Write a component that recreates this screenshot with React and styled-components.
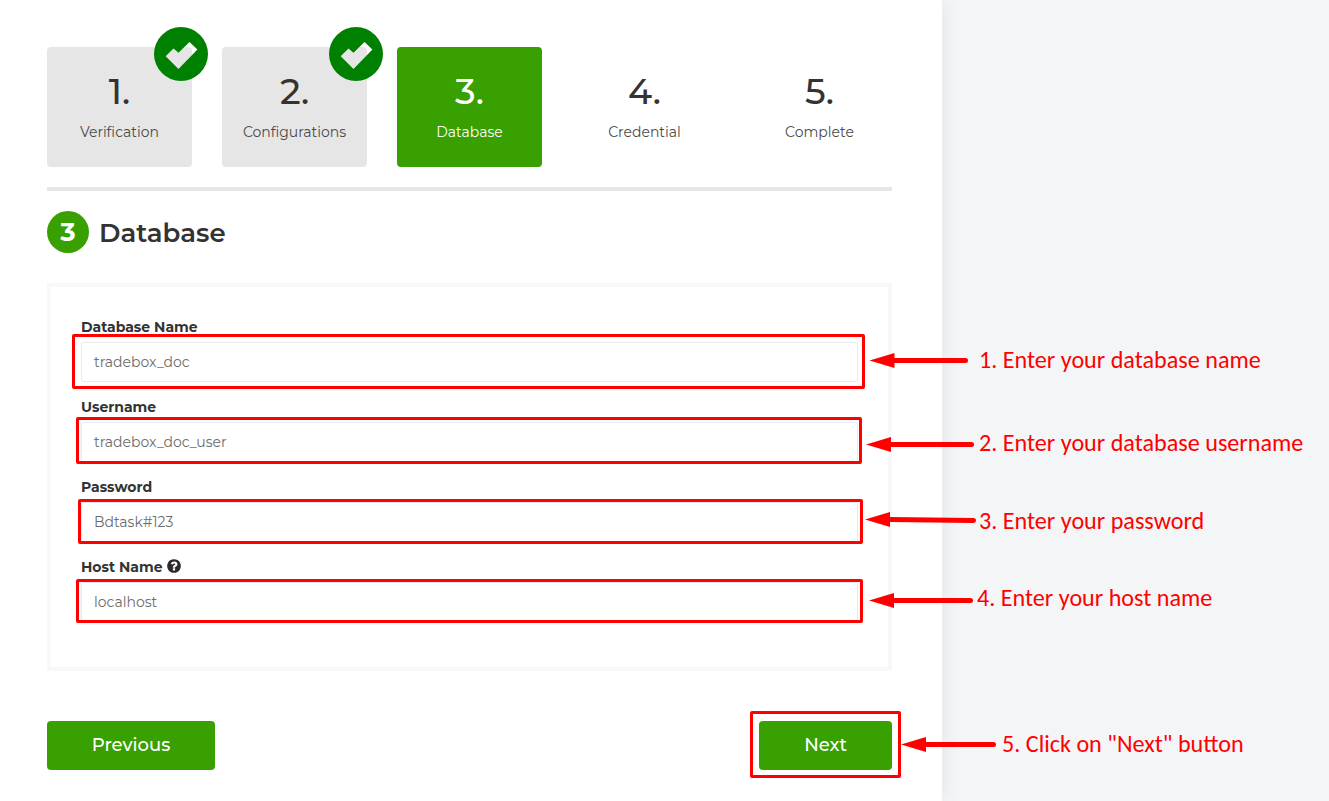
import React from 'react';
import styled, { createGlobalStyle } from 'styled-components';

const GlobalStyle = createGlobalStyle`
  *, *::before, *::after { box-sizing: border-box; }
  body {
    margin: 0;
    background: #f3f5f7;
    color: #333;
    font-family: Montserrat, Inter, "Liberation Sans", sans-serif;
    overflow: hidden;
  }
`;

const Page = styled.div`
  position: relative;
  width: 1329px;
  height: 801px;
  overflow: hidden;
`;

const Panel = styled.main`
  width: 942px;
  height: 801px;
  padding: 47px 50px 0 47px;
  background: #fff;
  box-shadow: 0 0 20px rgba(0, 0, 0, 0.08);
`;

const Steps = styled.ol`
  display: flex;
  gap: 30px;
  margin: 0;
  padding: 0 0 20px;
  list-style: none;
  border-bottom: 4px solid #e6e6e6;
`;

const Step = styled.li`
  position: relative;
  display: flex;
  flex-direction: column;
  align-items: center;
  width: 145px;
  height: 120px;
  padding-top: 21px;
  border-radius: 4px;
  color: ${(p) => (p.$state === 'active' ? '#fff' : '#333')};
  background: ${(p) =>
    ({ done: '#e6e6e6', active: '#38a000' })[p.$state] || 'transparent'};
`;

const StepNumber = styled.span`
  font-size: 36px;
  font-weight: 500;
  line-height: 46px;
`;

const StepLabel = styled.span`
  margin-top: 8px;
  font-size: 14px;
  font-weight: 400;
  line-height: 20px;
  color: ${(p) => (p.$active ? '#fff' : '#4a4a4a')};
`;

const StepCheck = styled.svg`
  position: absolute;
  top: -20px;
  right: -16px;
  width: 54px;
  height: 54px;
  fill: #008000;
`;

const Heading = styled.h2`
  display: flex;
  align-items: center;
  gap: 10px;
  height: 42px;
  margin: 20px 0 30px;
  font-size: 26px;
  font-weight: 600;
`;

const HeadingText = styled.span`
  padding-top: 2px;
`;

const HeadingBadge = styled.span`
  display: flex;
  align-items: center;
  justify-content: center;
  width: 42px;
  height: 42px;
  border-radius: 50%;
  background: #38a000;
  color: #fff;
  font-weight: 700;
`;

const Card = styled.section`
  height: 388px;
  padding: 30px;
  border: 4px solid #f8f8f9;
`;

const Field = styled.div`
  display: flex;
  flex-direction: column;
  gap: 5px;
  margin-bottom: 15px;
`;

const Label = styled.label`
  display: flex;
  align-items: center;
  gap: 3px;
  height: 20px;
  font-size: 14px;
  font-weight: 700;
`;

const Value = styled.div`
  display: flex;
  align-items: center;
  width: 777px;
  height: 40px;
  padding: 0 12px;
  border: 1px solid #e9e9f0;
  border-radius: 2px;
  color: #6c6c6c;
  font-size: 14px;
  font-weight: 400;
`;

const HelpIcon = styled.svg`
  width: 16px;
  height: 16px;
  margin-top: -2px;
  fill: #2b2b2b;
`;

const Actions = styled.div`
  display: flex;
  justify-content: space-between;
  margin-top: 50px;
`;

const Button = styled.button`
  width: ${(p) => p.$width}px;
  height: 49px;
  padding: 0 0 2px;
  border: 0;
  border-radius: 4px;
  background: #38a000;
  color: #fff;
  font: 500 18px Montserrat, Inter, "Liberation Sans", sans-serif;
`;

const Frame = styled.div`
  position: absolute;
  left: ${(p) => p.$x}px;
  top: ${(p) => p.$y}px;
  width: ${(p) => p.$w}px;
  height: ${(p) => p.$h}px;
  border: 3px solid #f00;
  border-radius: 2px;
`;

const Arrows = styled.svg`
  position: absolute;
  inset: 0;
  width: 1329px;
  height: 801px;
  fill: #f00;
  stroke: none;
`;

const Note = styled.p`
  position: absolute;
  left: ${(p) => p.$x}px;
  top: ${(p) => p.$y - 14}px;
  margin: 0;
  color: #f00;
  font-family: Calibri, Carlito, Lato, sans-serif;
  font-size: 24.15px;
  line-height: 28px;
  white-space: nowrap;
`;

const steps = [
  { label: 'Verification', state: 'done' },
  { label: 'Configurations', state: 'done' },
  { label: 'Database', state: 'active' },
  { label: 'Credential' },
  { label: 'Complete' },
];

const fields = [
  { label: 'Database Name', value: 'tradebox_doc' },
  { label: 'Username', value: 'tradebox_doc_user' },
  { label: 'Password', value: 'Bdtask#123' },
  { label: 'Host Name', value: 'localhost', help: true },
];

const notes = [
  { text: '1. Enter your database name', x: 979, y: 360, frame: [72, 334, 793, 55], arrow: [869.5, 360.5, 968, 360.5] },
  { text: '2. Enter your database username', x: 979, y: 443, frame: [76, 417, 786, 47], arrow: [866, 444.5, 974, 444.5] },
  { text: '3. Enter your password', x: 979, y: 521, frame: [78, 499, 785, 45], arrow: [865, 519.5, 976, 520.5] },
  { text: '4. Enter your host name', x: 977, y: 598, frame: [76, 579, 787, 44], arrow: [869, 600.5, 973, 600.5] },
  { text: '5. Click on "Next" button', x: 1002, y: 744, frame: [750, 711, 151, 67], arrow: [901, 744.5, 996, 744.5] },
];

function Arrow({ x1, y1, x2, y2 }) {
  return (
    <g>
      <path d={`M${x1} ${y1}l25-7.5v15z`} />
      <path d={`M${x1 + 24} ${y1}L${x2 - 2.5} ${y2}`} stroke="#f00" strokeWidth="5" strokeLinecap="round" />
    </g>
  );
}

export default function App() {
  return (
    <Page>
      <GlobalStyle />
      <Panel>
        <Steps>
          {steps.map((s, i) => (
            <Step key={s.label} $state={s.state}>
              <StepNumber>{i + 1}.</StepNumber>
              <StepLabel $active={s.state === 'active'}>{s.label}</StepLabel>
              {s.state === 'done' && (
                <StepCheck viewBox="0 0 54 54">
                  <path
                    fillRule="evenodd"
                    d="M27 0a27 27 0 1 0 0 54a27 27 0 0 0 0-54zM11.7 29.2L19.5 21.5L24.5 25.8L35.5 15L43.4 22.5L24.5 42z"
                  />
                </StepCheck>
              )}
            </Step>
          ))}
        </Steps>
        <Heading>
          <HeadingBadge>3</HeadingBadge>
          <HeadingText>Database</HeadingText>
        </Heading>
        <Card>
          {fields.map((f) => (
            <Field key={f.label}>
              <Label>
                {f.label}
                {f.help && (
                  <HelpIcon viewBox="0 0 1792 1792">
                    <path d="M1024 1376v-192q0-14-9-23t-23-9h-192q-14 0-23 9t-9 23v192q0 14 9 23t23 9h192q14 0 23-9t9-23zm256-672q0-88-55.5-163t-138.5-116-170-41q-243 0-371 213-15 24 8 42l132 100q7 6 19 6 16 0 25-12 53-68 86-92 34-24 86-24 48 0 85.5 26t37.5 59q0 38-20 61t-68 45q-63 28-115.5 86.5t-52.5 125.5v36q0 14 9 23t23 9h192q14 0 23-9t9-23q0-19 21.5-49.5t54.5-49.5q32-18 49-28.5t46-35 44.5-48 28-60.5 12.5-81zm384 192q0 209-103 385.5t-279.5 279.5-385.5 103-385.5-103-279.5-279.5-103-385.5 103-385.5 279.5-279.5 385.5-103 385.5 103 279.5 279.5 103 385.5z" />
                  </HelpIcon>
                )}
              </Label>
              <Value>{f.value}</Value>
            </Field>
          ))}
        </Card>
        <Actions>
          <Button $width={168}>Previous</Button>
          <Button $width={133}>Next</Button>
        </Actions>
      </Panel>
      <Arrows viewBox="0 0 1329 801">
        {notes.map(({ arrow: [x1, y1, x2, y2] }) => (
          <Arrow key={y1} x1={x1} y1={y1} x2={x2} y2={y2} />
        ))}
      </Arrows>
      {notes.map(({ text, x, y, frame: [fx, fy, fw, fh] }) => (
        <React.Fragment key={text}>
          <Frame $x={fx} $y={fy} $w={fw} $h={fh} />
          <Note $x={x} $y={y}>{text}</Note>
        </React.Fragment>
      ))}
    </Page>
  );
}
